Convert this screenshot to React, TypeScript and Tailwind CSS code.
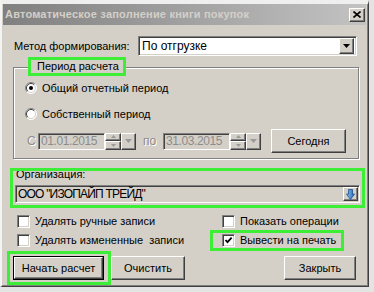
import React from 'react';

const raised =
  'bg-[#d4d0c8] border border-t-white border-l-white border-r-[#404040] border-b-[#404040] shadow-[inset_-1px_-1px_0_#808080,inset_1px_1px_0_#d4d0c8]';
const sunken =
  'border border-t-[#808080] border-l-[#808080] border-r-white border-b-white shadow-[inset_1px_1px_0_#404040,inset_-1px_-1px_0_#d4d0c8]';
const green = 'border-[3px] border-[#3cef36]';

function Radio({ checked }: { checked?: boolean }) {
  return (
    <svg width="12" height="12" viewBox="0 0 12 12" className="shrink-0">
      <circle cx="6" cy="6" r="5.5" fill="#fff" />
      <path d="M2.1 9.9 A5.5 5.5 0 0 1 9.9 2.1" stroke="#808080" fill="none" />
      <path d="M9.9 2.1 A5.5 5.5 0 0 1 2.1 9.9" stroke="#fff" fill="none" />
      <path d="M2.8 9.2 A4.5 4.5 0 0 1 9.2 2.8" stroke="#404040" fill="none" />
      <path d="M9.2 2.8 A4.5 4.5 0 0 1 2.8 9.2" stroke="#d4d0c8" fill="none" />
      {checked && <circle cx="6" cy="6" r="2" fill="#000" />}
    </svg>
  );
}

function Check({ checked }: { checked?: boolean }) {
  return (
    <div className={`w-[13px] h-[13px] bg-white shrink-0 ${sunken}`}>
      {checked && (
        <svg width="11" height="11" viewBox="0 0 11 11">
          <path d="M2.5 5 L4.5 7.2 L8.6 2.6" stroke="#000" strokeWidth="1.8" fill="none" />
        </svg>
      )}
    </div>
  );
}

function DownArrow({ color = '#000' }: { color?: string }) {
  return (
    <svg width="7" height="4" viewBox="0 0 7 4">
      <path d="M0 0 H7 L3.5 4 Z" fill={color} />
    </svg>
  );
}

function DateField({ value }: { value: string }) {
  return (
    <div className="flex items-center">
      <div className={`w-[67px] h-[17px] flex items-center pl-[2px] tracking-[-0.4px] text-[#8c8c8c] ${sunken}`}>{value}</div>
      <div className="flex flex-col w-[16px] h-[17px]">
        <div className={`h-[8px] flex items-center justify-center ${raised}`}>
          <svg width="5" height="3" viewBox="0 0 5 3">
            <path d="M0 3 H5 L2.5 0 Z" fill="#9a9a9a" />
          </svg>
        </div>
        <div className={`h-[9px] flex items-center justify-center ${raised}`}>
          <svg width="5" height="3" viewBox="0 0 5 3">
            <path d="M0 0 H5 L2.5 3 Z" fill="#9a9a9a" />
          </svg>
        </div>
      </div>
      <div className={`w-[15px] h-[17px] flex items-center justify-center ${raised}`}>
        <DownArrow color="#9a9a9a" />
      </div>
    </div>
  );
}

export default function App() {
  return (
    <div className="w-[374px] h-[292px] bg-[#e4e4e4] overflow-hidden text-[11px] leading-[13px] whitespace-nowrap text-black font-['Liberation_Sans',Arial,sans-serif]">
      <div className="w-[369px] h-[287px] bg-[#d4d0c8] border-t-[4px] border-t-[#efefef] border-l-[2px] border-l-[#f4f4f4] border-r border-r-[#404040] border-b border-b-[#404040] shadow-[inset_-1px_-1px_0_#808080] flex flex-col">
        {/* title */}
        <div className="h-[21px] ml-[1px] mr-[2px] flex items-center justify-between bg-gradient-to-r from-[#808080] to-[#c3c3c3]">
          <span className="pl-[2px] font-bold tracking-[0.2px] text-[#d4d0c8]">
            Автоматическое заполнение книги покупок
          </span>
          <div className={`w-[16px] h-[14px] mr-[1px] flex items-center justify-center ${raised}`}>
            <svg width="8" height="7" viewBox="0 0 8 7">
              <path d="M0.5 0.5 L7.5 6.5 M7.5 0.5 L0.5 6.5" stroke="#000" strokeWidth="1.6" />
            </svg>
          </div>
        </div>

        {/* method */}
        <div className="mt-[11px] flex items-center">
          <span className="ml-[12px] w-[124px]">Метод формирования:</span>
          <div className={`w-[219px] h-[20px] bg-white flex items-center justify-between pl-[3px] pr-[2px] ${sunken}`}>
            <span className="text-[12px]">По отгрузке</span>
            <div className={`w-[15px] h-[16px] flex items-center justify-center ${raised}`}>
              <DownArrow />
            </div>
          </div>
        </div>

        {/* period group */}
        <div className="mt-[11px] ml-[11px] w-[346px] h-[92px] border border-[#808080] shadow-[inset_1px_1px_0_#fff,1px_1px_0_#fff] flex flex-col">
          <div className={`-mt-[11px] ml-[14px] w-[98px] h-[19px] bg-[#d4d0c8] pl-[6px] flex items-center ${green}`}>
            Период расчета
          </div>
          <div className="mt-[6px] ml-[11px] flex items-center gap-[5px] h-[12px]">
            <Radio checked />
            <span>Общий отчетный период</span>
          </div>
          <div className="mt-[14px] ml-[11px] flex items-center gap-[5px] h-[12px]">
            <Radio />
            <span>Собственный период</span>
          </div>
          <div className="mt-[9px] ml-[13px] flex items-center h-[24px] text-[12px]">
            <span className="w-[11px] text-[#8c8c8c] [text-shadow:1px_1px_0_#fff]">С</span>
            <DateField value="01.01.2015" />
            <span className="ml-[7px] w-[20px] text-[#8c8c8c] [text-shadow:1px_1px_0_#fff]">по</span>
            <DateField value="31.03.2015" />
            <div className={`ml-[10px] w-[75px] h-[24px] flex items-center justify-center text-[11px] ${raised}`}>Сегодня</div>
          </div>
        </div>

        {/* organisation */}
        <div className={`mt-[9px] ml-[8px] w-[355px] h-[40px] flex flex-col ${green}`}>
          <div className="h-[13px] overflow-hidden pl-[3px]">
            <div className="-mt-[3px]">Организация:</div>
          </div>
          <div className={`mt-[1px] ml-[2px] w-[345px] h-[18px] flex items-center justify-between pl-[2px] pr-[1px] ${sunken} border-t-[#404040] border-l-[#404040]`}>
            <span className="text-[12px] tracking-[-0.8px]">ООО "ИЗОПАЙП ТРЕЙД"</span>
            <div className={`w-[15px] h-[14px] flex items-center justify-center ${raised}`}>
              <svg width="9" height="11" viewBox="0 0 9 11">
                <defs>
                  <linearGradient id="ab" x1="0" y1="0" x2="1" y2="0">
                    <stop offset="0" stopColor="#8cc4f4" />
                    <stop offset="1" stopColor="#1f63b6" />
                  </linearGradient>
                </defs>
                <path d="M2.5 0.5 H6.5 V5 H8.5 L4.5 10.5 L0.5 5 H2.5 Z" fill="url(#ab)" stroke="#1c4f8e" strokeWidth="0.8" />
              </svg>
            </div>
          </div>
        </div>

        {/* checkboxes */}
        <div className="mt-[7px] ml-[15px] grid grid-cols-[193px_134px] gap-y-[2px]">
          <div className="flex items-center gap-[5px] h-[13px]">
            <Check />
            <span>Удалять ручные записи</span>
          </div>
          <div className="flex items-center gap-[5px] h-[13px] pl-[12px]">
            <Check />
            <span>Показать операции</span>
          </div>
          <div className="flex items-center gap-[5px] h-[21px]">
            <Check />
            <span>Удалять измененные&nbsp; записи</span>
          </div>
          <div className={`flex items-center gap-[5px] h-[21px] pl-[9px] ${green}`}>
            <Check checked />
            <span>Вывести на печать</span>
          </div>
        </div>

        {/* buttons */}
        <div className="flex items-center">
          <div className={`ml-[5px] w-[104px] h-[34px] flex items-center pl-[3px] ${green}`}>
            <div className="w-[91px] h-[24px] border border-black">
              <div className={`w-full h-full flex items-center justify-center ${raised}`}>Начать расчет</div>
            </div>
          </div>
          <div className={`w-[74px] h-[24px] flex items-center justify-center ${raised}`}>Очистить</div>
          <div className={`ml-[99px] w-[72px] h-[24px] flex items-center justify-center ${raised}`}>Закрыть</div>
        </div>
      </div>
    </div>
  );
}
